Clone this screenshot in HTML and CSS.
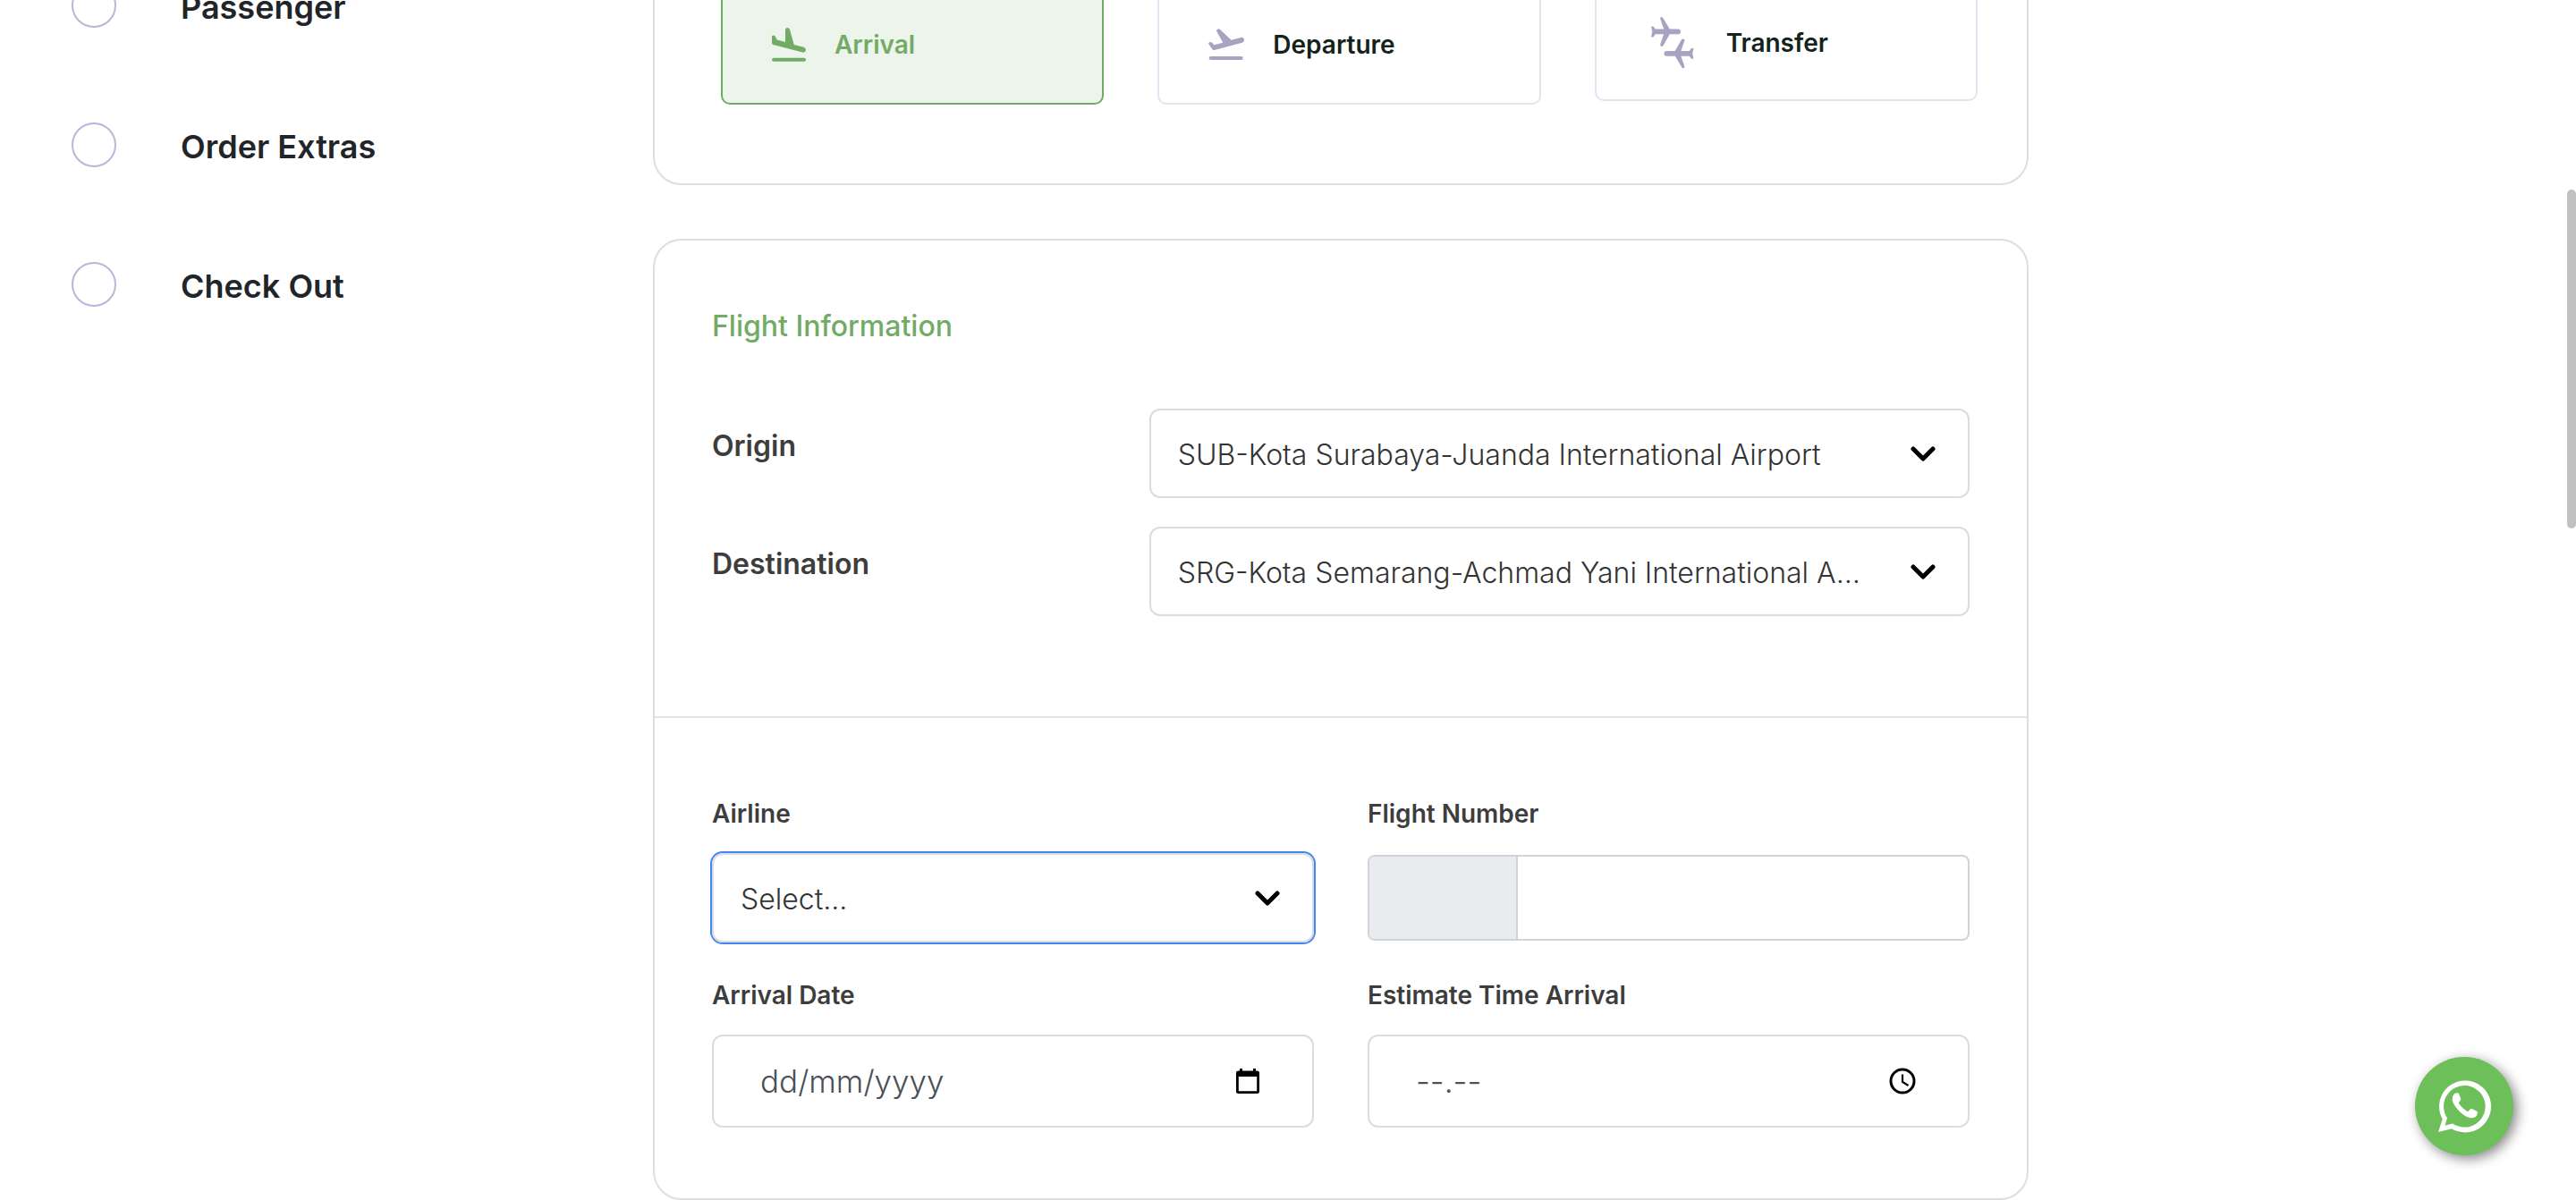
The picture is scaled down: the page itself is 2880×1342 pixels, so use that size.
FILE: index.html
```html
<!DOCTYPE html>
<html lang="en">
<head>
<meta charset="utf-8">
<meta name="viewport" content="width=device-width, initial-scale=1">
<title>Flight Booking</title>
<link rel="stylesheet" href="styles.css">
</head>
<body>
<div class="page">
  <nav class="steps" aria-label="Booking steps">
    <ol class="step-list">
      <li class="step"><span class="step-dot"></span><span class="step-name">Passenger</span></li>
      <li class="step"><span class="step-dot"></span><span class="step-name">Order Extras</span></li>
      <li class="step"><span class="step-dot"></span><span class="step-name">Check Out</span></li>
    </ol>
  </nav>

  <main class="content">
    <section class="card options-card">
      <button type="button" class="option option-active">
        <svg width="38" height="38" viewBox="0 0 38 38" fill="currentColor" aria-hidden="true"><path d="M0 9.8Q.2 8.300 1.500 8.400Q3.500 8.600 4 10L5.700 13.600L15 16V2.200Q15.400 0 17.500 0Q19.200 0 20 2L24.700 18.900L35.500 21.800Q38 22.700 38 25Q37.200 28.200 34.300 27.500L1.400 19Q0 18.500 0 17.200Z"/><rect y="33.700" width="38" height="4.100" rx="2"/></svg>
        <span>Arrival</span>
      </button>
      <button type="button" class="option">
        <svg width="40" height="36" viewBox="0 0 40 36" fill="currentColor" aria-hidden="true"><path d="M.2 17Q-.2 15.500 1.300 15.200Q3 14.800 4.200 15.800L6.300 18.300L16.300 15.700L9.200 3Q8.800 1 10.800.4Q12.200 0 13.200 1L25.500 12.700L36.500 9.900Q39.500 9.600 40 12.200Q40.200 14.800 37.800 15.700L6.700 23.900Q5.200 24.200 4.300 22.900Z"/><rect x=".7" y="31" width="38" height="4.100" rx="2"/></svg>
        <span>Departure</span>
      </button>
      <button type="button" class="option option-transfer">
        <svg width="48" height="58" viewBox="0 0 47 57" fill="currentColor" aria-hidden="true"><path id="plane" d="M9.900 2Q9.700.2 11.200 0Q12.300 0 12.900 1L20.300 13.300H29.500Q32.400 13.700 32.400 16.200Q32.200 18.800 29.500 19H20.300L13.200 31.500Q12.300 32.700 11 32.300Q9.700 31.800 9.900 30.300L13.800 19H4.500L3 21.300Q1.800 22.700.5 22L0 21.400L1.200 16.200L0 11L.8 10.400Q2.200 10 3 11.100L4.500 13.300H13.800Z"/><use href="#plane" transform="rotate(180 23.250 28.200)"/></svg>
        <span>Transfer</span>
      </button>
    </section>

    <form class="card flight-card">
      <div class="route">
        <h2 class="card-title">Flight Information</h2>
        <div class="route-rows">
          <div class="route-row">
            <label class="route-label" for="origin">Origin</label>
            <div class="select-box">
              <select id="origin"><option>SUB-Kota Surabaya-Juanda International Airport</option></select>
              <svg class="chevron" width="28" height="18" viewBox="0 0 28 18" aria-hidden="true"><path d="M3 3L14 14L25 3"/></svg>
            </div>
          </div>
          <div class="route-row">
            <label class="route-label" for="destination">Destination</label>
            <div class="select-box">
              <select id="destination"><option>SRG-Kota Semarang-Achmad Yani International Airport</option></select>
              <svg class="chevron" width="28" height="18" viewBox="0 0 28 18" aria-hidden="true"><path d="M3 3L14 14L25 3"/></svg>
            </div>
          </div>
        </div>
      </div>

      <div class="details">
        <div class="field">
          <label for="airline">Airline</label>
          <div class="select-box select-focus">
            <select id="airline"><option>Select...</option></select>
            <svg class="chevron" width="28" height="18" viewBox="0 0 28 18" aria-hidden="true"><path d="M3 3L14 14L25 3"/></svg>
          </div>
        </div>
        <div class="field">
          <label for="flight-number">Flight Number</label>
          <div class="number-group">
            <span class="number-prefix"></span>
            <input id="flight-number" type="text">
          </div>
        </div>
        <div class="field">
          <label for="arrival-date">Arrival Date</label>
          <div class="picker">
            <input id="arrival-date" type="text" placeholder="dd/mm/yyyy">
            <button type="button" aria-label="Open calendar"><svg width="28" height="30" viewBox="0 0 28 30" aria-hidden="true"><path fill="#000" fill-rule="evenodd" d="M5 1H8V3.500H20V1H23V3.500H24.500Q27 3.500 27 6V26.500Q27 29 24.500 29H3.500Q1 29 1 26.500V6Q1 3.500 3.500 3.500H5ZM3.800 10V26.300H24.200V10Z"/></svg></button>
          </div>
        </div>
        <div class="field">
          <label for="arrival-time">Estimate Time Arrival</label>
          <div class="picker">
            <input id="arrival-time" type="text" placeholder="--.--">
            <button type="button" aria-label="Open time picker"><svg width="30" height="30" viewBox="0 0 30 30" fill="none" stroke="#000" aria-hidden="true"><circle cx="15" cy="15" r="13" stroke-width="3"/><path d="M15 7.500V16L21.500 20" stroke-width="2.200"/></svg></button>
          </div>
        </div>
      </div>
    </form>
  </main>
</div>

<a class="whatsapp" href="#" aria-label="Chat on WhatsApp">
  <svg viewBox="0 0 110 110" fill="#fff" aria-hidden="true"><path fill-rule="evenodd" d="M26 84L30.700 69.500A29 29 0 1 1 41 80.200ZM33.500 76.700L42 74.400A23.300 23.300 0 1 0 36 68.300Z"/><path d="M41.700 47.500Q41.600 43.500 43.800 41.200Q45.500 40 48 40.300Q48.900 40.600 49.300 41.800L51.200 46.800Q51.300 48 50.300 49.300L48.700 51.400Q51 55 54 57.600Q56.500 59.900 59.200 61.200L62 58.200Q62.800 57.600 63.800 58L69.200 60.700Q70 61.200 70 62.300Q69.700 65.500 67.800 67Q65.500 68.600 62 68.300Q56.500 67.300 50.500 61.700Q44.500 55.700 42.500 51Q41.800 49 41.700 47.500Z"/></svg>
</a>
<div class="scroll-thumb" aria-hidden="true"></div>
</body>
</html>
```
FILE: styles.css
```css
* {
  box-sizing: border-box;
}

body {
  margin: 0;
  background: #fff;
  color: #212529;
  font-family: Inter, "Open Sans", "Liberation Sans", sans-serif;
}

button,
input,
select {
  margin: 0;
  padding: 0;
  border: 0;
  outline: 0;
  background: none;
  color: inherit;
  font: inherit;
}

.page {
  display: flex;
  padding: 0 21.25% 0 80px;
  overflow: hidden;
}

/* Booking steps */
.steps {
  flex: 0 0 650px;
  margin-top: -19px;
}

.step-list {
  display: flex;
  flex-direction: column;
  gap: 106px;
  margin: 0;
  padding: 0;
  list-style: none;
}

.step {
  display: flex;
  align-items: center;
  gap: 72px;
  height: 50px;
}

.step-dot {
  width: 50px;
  height: 50px;
  border: 2px solid #b9b6d8;
  border-radius: 50%;
}

.step-name {
  padding-top: 4px;
  font-size: 36px;
  font-weight: 600;
}

/* Cards */
.content {
  flex: 1;
  min-width: 0;
  margin-top: -60px;
}

.card {
  border: 2px solid #dedede;
  border-radius: 32px;
}

.options-card {
  display: grid;
  grid-template-columns: repeat(3, 1fr);
  align-items: start;
  gap: 60px;
  margin-bottom: 60px;
  padding: 40px 55px 88px 74px;
}

.option {
  display: flex;
  align-items: center;
  gap: 32px;
  height: 135px;
  padding-left: 55px;
  border: 2px solid #e5e3f0;
  border-radius: 10px;
  color: #14231a;
  font-size: 28px;
  font-weight: 600;
}

.option svg {
  color: #a6a4c0;
}

.option-active {
  border-color: #72ab65;
  background: #edf4ec;
  color: #72ab65;
}

.option-active svg {
  color: #72ab65;
}

.option-transfer {
  gap: 36px;
  height: 131px;
  padding-left: 61px;
}

/* Flight information */
.route {
  padding: 72px 64px 112px;
  border-bottom: 2px solid #e3e3e3;
}

.card-title {
  margin: 0 0 68px;
  color: #72ab65;
  font-size: 32px;
  font-weight: 500;
  line-height: 48px;
}

.route-rows {
  display: grid;
  gap: 32px;
}

.route-row {
  display: grid;
  grid-template-columns: repeat(3, minmax(0, 1fr));
  column-gap: 60px;
}

.route-row .select-box {
  grid-column: span 2;
}

.route-label {
  padding-top: 18px;
  color: #3d3d3d;
  font-size: 32px;
  font-weight: 600;
  line-height: 48px;
}

.select-box {
  display: grid;
  align-items: center;
  height: 100px;
  border: 2px solid #dcdcdc;
  border-radius: 12px;
  color: #333;
  font-size: 32px;
  font-weight: 300;
}

.select-box select,
.select-box .chevron {
  grid-area: 1 / 1;
}

.select-box select {
  width: 100%;
  height: 96px;
  padding: 2px 114px 0 30px;
  appearance: none;
  text-overflow: ellipsis;
}

.chevron {
  justify-self: end;
  margin: 2px 36px 0 0;
  fill: none;
  stroke: #000;
  stroke-width: 5;
  stroke-linecap: round;
  stroke-linejoin: round;
  pointer-events: none;
}

.select-focus {
  box-shadow: 0 0 0 2px #4285f4;
}

/* Flight details */
.details {
  display: grid;
  grid-template-columns: repeat(2, minmax(0, 1fr));
  gap: 39px 60px;
  padding: 87px 64px 79px;
}

.field {
  display: flex;
  flex-direction: column;
  gap: 24px;
}

.field label {
  color: #3d3d3d;
  font-size: 28px;
  font-weight: 600;
  line-height: 40px;
}

.number-group {
  display: flex;
  height: 96px;
  margin: 2px 0;
  border: 2px solid #ced4da;
  border-radius: 8px;
  overflow: hidden;
}

.number-prefix {
  flex: 0 0 166px;
  border-right: 2px solid #ced4da;
  background: #e9ebef;
}

.number-group input {
  flex: 1;
  min-width: 0;
  padding: 0 24px;
  font-size: 32px;
}

.picker {
  display: flex;
  align-items: center;
  height: 104px;
  padding: 0 58px 0 52px;
  border: 2px solid #dcdcdc;
  border-radius: 12px;
  color: #495057;
  font-size: 35px;
  font-weight: 300;
}

.picker input {
  flex: 1;
  min-width: 0;
  height: 100px;
}

.picker input::placeholder {
  color: #495057;
  opacity: 1;
}

.picker button {
  display: flex;
}

/* Floating chat button and page scroll thumb */
.whatsapp {
  position: fixed;
  right: 70px;
  bottom: 50px;
  width: 110px;
  height: 110px;
  border-radius: 50%;
  background: #6dbf5a;
  box-shadow: 4px 4px 14px #888;
}

.whatsapp svg {
  display: block;
}

.scroll-thumb {
  position: fixed;
  top: 212px;
  right: 0;
  width: 10px;
  height: 28.250%;
  border-radius: 5px;
  background: #c1c1c1;
}
```
